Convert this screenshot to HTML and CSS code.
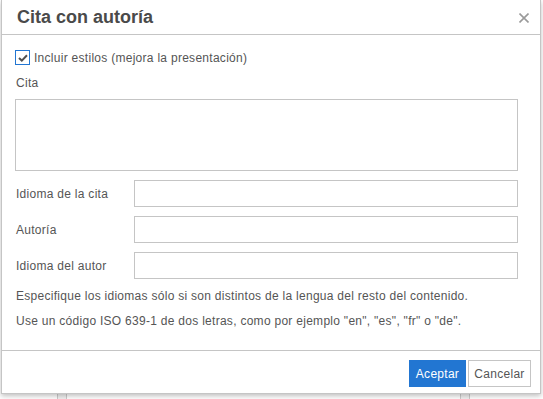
FILE: index.html
```html
<!DOCTYPE html>
<html lang="es">

<head>
    <meta charset="UTF-8">
    <meta name="viewport" content="width=device-width, initial-scale=1.0">
    <title>Cita con autoría</title>
    <link rel="stylesheet" href="styles.css">
</head>

<body>
    <div class="backdrop">
        <div class="editor-line editor-line--left"></div>
        <div class="editor-line editor-line--right"></div>
        <div class="dialog">
            <header class="dialog__header">
                <h1 class="dialog__title">Cita con autoría</h1>
                <svg class="dialog__close" width="10" height="10" viewBox="0 0 10 10">
                    <path d="M0.5 0.5 L9.5 9.5 M9.5 0.5 L0.5 9.5" stroke="#9a9a9a" stroke-width="1.6" />
                </svg>
            </header>
            <main class="dialog__body">
                <label class="check">
                    <span class="check__box">
                        <svg width="10" height="8" viewBox="0 0 10 8">
                            <path d="M1 4 L3.8 6.6 L9 1.3" fill="none" stroke="#505050" stroke-width="2" />
                        </svg>
                    </span>
                    <span>Incluir estilos (mejora la presentación)</span>
                </label>
                <div class="field field--stack">
                    <span class="field__label">Cita</span>
                    <div class="field__area"></div>
                </div>
                <div class="field">
                    <span class="field__label">Idioma de la cita</span>
                    <div class="field__input"></div>
                </div>
                <div class="field">
                    <span class="field__label">Autoría</span>
                    <div class="field__input"></div>
                </div>
                <div class="field">
                    <span class="field__label">Idioma del autor</span>
                    <div class="field__input"></div>
                </div>
                <p class="note">Especifique los idiomas sólo si son distintos de la lengua del resto del contenido.</p>
                <p class="note">Use un código ISO 639-1 de dos letras, como por ejemplo "en", "es", "fr" o "de".</p>
            </main>
            <footer class="dialog__footer">
                <button class="button button--primary">Aceptar</button>
                <button class="button button--cancel">Cancelar</button>
            </footer>
        </div>
    </div>
</body>

</html>
```

FILE: styles.css
```css
body {
    margin: 0;
    background-color: #fff;
    font-family: 'Liberation Sans', Arial, sans-serif;
}

.backdrop {
    position: relative;
    height: 399px;
    width: 543px;
    overflow: hidden;
}

.editor-line {
    position: absolute;
    bottom: 0;
    height: 12px;
    width: 8px;
    border-left: 1px solid #ccc;
    border-right: 1px solid #ccc;
    background-color: #f2f2f2;
}

.editor-line--left {
    left: 57px;
}

.editor-line--right {
    left: 460px;
}

.dialog {
    position: relative;
    margin-left: 1px;
    width: 540px;
    height: 394px;
    box-sizing: border-box;
    border: 1px solid #c5c5c5;
    border-top: none;
    background-color: #fff;
    box-shadow: 0 2px 5px rgba(0, 0, 0, 0.25);
    display: flex;
    flex-direction: column;
    color: #555;
}

.dialog__header {
    height: 35px;
    box-sizing: border-box;
    border-bottom: 1px solid #c5c5c5;
    display: flex;
    align-items: center;
    justify-content: space-between;
    padding: 0 11px 0 15px;
}

.dialog__title {
    margin: 0;
    font-size: 18px;
    font-weight: bold;
    color: #4a4a4a;
}

.dialog__close {
    margin-top: 1px;
}

.dialog__body {
    flex: 1;
    padding: 15px 22px 0 13px;
    font-size: 12px;
    letter-spacing: 0.28px;
}

.check {
    display: flex;
    align-items: center;
    gap: 4px;
    height: 15px;
}

.check__box {
    width: 15px;
    height: 15px;
    box-sizing: border-box;
    border: 1px solid #2276d2;
    display: flex;
    align-items: center;
    justify-content: center;
}

.field {
    display: flex;
    align-items: center;
    margin-top: 9px;
}

.field--stack {
    flex-direction: column;
    align-items: stretch;
    margin-top: 11px;
}

.field--stack .field__label {
    line-height: 14px;
    margin-bottom: 9px;
}

.field__label {
    width: 118px;
    padding-left: 1px;
}

.field__area {
    height: 72px;
    box-sizing: border-box;
    border: 1px solid #c5c5c5;
}

.field__input {
    flex: 1;
    height: 27px;
    box-sizing: border-box;
    border: 1px solid #c5c5c5;
}

.note {
    margin: 10px 0 0 1px;
    line-height: 15px;
}

.dialog__footer {
    height: 43px;
    box-sizing: border-box;
    border-top: 1px solid #c5c5c5;
    display: flex;
    justify-content: flex-end;
    align-items: flex-start;
    gap: 2px;
    padding: 9px 9px 0 0;
}

.button {
    height: 27px;
    box-sizing: border-box;
    border: 1px solid #c5c5c5;
    background-color: #fff;
    color: #555;
    font-family: 'Liberation Sans', Arial, sans-serif;
    font-size: 12px;
    letter-spacing: 0.28px;
    padding: 0;
    cursor: pointer;
}

.button--primary {
    width: 57px;
    background-color: #2276d2;
    border-color: #2276d2;
    color: #fff;
}

.button--cancel {
    width: 63px;
}
```
